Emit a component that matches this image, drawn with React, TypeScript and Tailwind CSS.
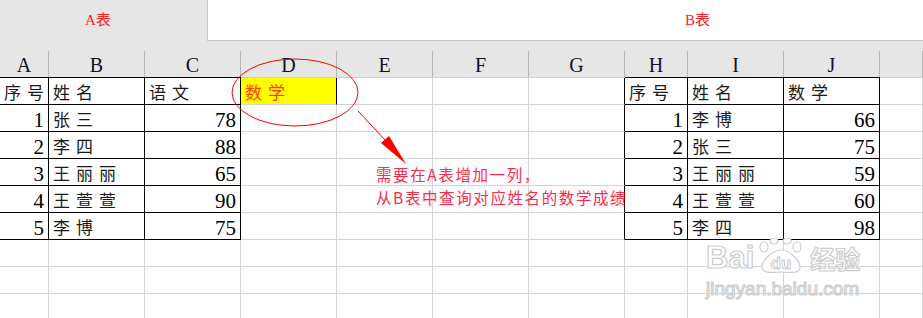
import clsx from 'clsx';

const COLS = ['A', 'B', 'C', 'D', 'E', 'F', 'G', 'H', 'I', 'J', ''];
const TABLE_COLS = [0, 1, 2, 7, 8, 9];

type Cell = { text: string; num?: boolean };

const tableA: Cell[][] = [
  [{ text: '序号' }, { text: '姓名' }, { text: '语文' }],
  [{ text: '1', num: true }, { text: '张三' }, { text: '78', num: true }],
  [{ text: '2', num: true }, { text: '李四' }, { text: '88', num: true }],
  [{ text: '3', num: true }, { text: '王丽丽' }, { text: '65', num: true }],
  [{ text: '4', num: true }, { text: '王萱萱' }, { text: '90', num: true }],
  [{ text: '5', num: true }, { text: '李博' }, { text: '75', num: true }],
];

const tableB: Cell[][] = [
  [{ text: '序号' }, { text: '姓名' }, { text: '数学' }],
  [{ text: '1', num: true }, { text: '李博' }, { text: '66', num: true }],
  [{ text: '2', num: true }, { text: '张三' }, { text: '75', num: true }],
  [{ text: '3', num: true }, { text: '王丽丽' }, { text: '59', num: true }],
  [{ text: '4', num: true }, { text: '王萱萱' }, { text: '60', num: true }],
  [{ text: '5', num: true }, { text: '李四' }, { text: '98', num: true }],
];

const ROWS = 9;

function cellAt(r: number, c: number): Cell | null {
  if (r > 5) return null;
  if (c <= 2) return tableA[r][c];
  if (c >= 7 && c <= 9) return tableB[r][c - 7];
  return null;
}

function HeaderCell({ letter, col }: { letter: string; col: number }) {
  const inTable = TABLE_COLS.includes(col);
  return (
    <div
      className={clsx(
        'flex h-[37px] items-end border-b bg-[#e6e6e6]',
        inTable ? 'border-black' : 'border-[#d0d0d0]',
      )}
    >
      <div className="h-[26px] w-full border-r border-[#b4b4b4] pt-[3px] text-center text-[20px] leading-[23px] text-[#10102a]">
        {letter}
      </div>
    </div>
  );
}

function DataCell({ r, c }: { r: number; c: number }) {
  const inTable = r <= 5 && TABLE_COLS.includes(c);
  const rightBlack = inTable || (r <= 5 && c === 6) || (r === 0 && c === 3);
  const yellow = r === 0 && c === 3;
  const cell = cellAt(r, c);

  return (
    <div
      className={clsx(
        'h-[27px] overflow-hidden whitespace-nowrap border-b border-r pt-[4px] leading-[23px]',
        rightBlack ? 'border-r-black' : 'border-r-[#d4d4d4]',
        inTable ? 'border-b-black' : 'border-b-[#d4d4d4]',
        yellow && 'bg-[#ffff00]',
      )}
    >
      {yellow && (
        <span className="pl-[4px] text-[17px] tracking-[6px] text-[#ff3c00]">数学</span>
      )}
      {cell &&
        (cell.num ? (
          <div className="pr-[4px] text-right text-[21px] text-black">{cell.text}</div>
        ) : (
          <div className="pl-[4px] text-[17px] tracking-[6px] text-[#1a1a1a]">{cell.text}</div>
        ))}
    </div>
  );
}

function Watermark() {
  const outline = '[-webkit-text-stroke:1.2px_#cdcdcd]';
  return (
    <div className="pointer-events-none absolute left-[706px] top-[238px] flex flex-col">
      <div className="flex items-end">
        <span
          className={clsx(
            'font-["Liberation_Sans",sans-serif] text-[31px] font-bold leading-[32px] text-white',
            outline,
          )}
        >
          Bai
        </span>
        <svg width="50" height="36" viewBox="0 0 50 36" className="ml-[2px]">
          <g fill="white" stroke="#cdcdcd" strokeWidth="1.2">
            <ellipse cx="8" cy="9" rx="4" ry="5" />
            <ellipse cx="18" cy="3" rx="4" ry="3" />
            <ellipse cx="31" cy="3" rx="4" ry="3" />
            <ellipse cx="41" cy="9" rx="4" ry="5" />
            <path d="M25 12 C 16 12, 6 23, 6 29 C 6 35, 14 35, 25 34 C 36 35, 44 35, 44 29 C 44 23, 34 12, 25 12 Z" />
          </g>
          <text
            x="25"
            y="31"
            textAnchor="middle"
            fontFamily="Liberation Sans, sans-serif"
            fontWeight="700"
            fontSize="17"
            fill="white"
            stroke="#cdcdcd"
            strokeWidth="1"
          >
            du
          </text>
        </svg>
        <span
          className={clsx(
            'ml-[4px] font-["Noto_Sans_CJK_SC",sans-serif] text-[25px] font-bold leading-[32px] text-white',
            outline,
          )}
        >
          经验
        </span>
      </div>
      <span
        className={clsx(
          'mt-[4px] font-["Liberation_Sans",sans-serif] text-[19px] leading-[22px] text-white',
          outline,
        )}
      >
        jingyan.baidu.com
      </span>
    </div>
  );
}

export default function App() {
  return (
    <div className='relative h-[318px] w-[923px] overflow-hidden bg-white font-["Liberation_Serif","Noto_Sans_CJK_SC",serif]'>
      <div className="flex h-[41px]">
        <div className="flex w-[207px] items-center bg-[#e6e6e6] pl-[85px] text-[15px] text-[#ff2020]">
          A表
        </div>
        <div className="flex flex-1 items-center border-b border-l border-[#c8c8c8] bg-white pl-[477px] text-[15px] text-[#ff2020]">
          B表
        </div>
      </div>

      <div className="grid grid-cols-[49px_96px_96px_96px_96px_96px_96px_63px_96px_96px_43px] bg-[#e6e6e6]">
        {COLS.map((l, c) => (
          <HeaderCell key={c} letter={l} col={c} />
        ))}
      </div>

      <div className="grid grid-cols-[49px_96px_96px_96px_96px_96px_96px_63px_96px_96px_43px]">
        {Array.from({ length: ROWS }).map((_, r) =>
          COLS.map((_, c) => <DataCell key={`${r}-${c}`} r={r} c={c} />),
        )}
      </div>

      <svg
        className="pointer-events-none absolute left-0 top-0"
        width="923"
        height="318"
        viewBox="0 0 923 318"
      >
        <ellipse cx="295" cy="92.5" rx="63" ry="33.5" fill="none" stroke="#ff0000" strokeWidth="1" />
        <line x1="358" y1="111" x2="386" y2="141" stroke="#ff0000" strokeWidth="1" />
        <polygon points="406,164 381,143 389,136" fill="#ff0000" />
      </svg>

      <div className='absolute left-[376px] top-[163px] font-["Noto_Sans_CJK_SC",sans-serif] text-[15.5px] leading-[22.5px] tracking-[1.6px] text-[#ff2a4a]'>
        <div>需要在A表增加一列，</div>
        <div>从B表中查询对应姓名的数学成绩</div>
      </div>

      <Watermark />
    </div>
  );
}
